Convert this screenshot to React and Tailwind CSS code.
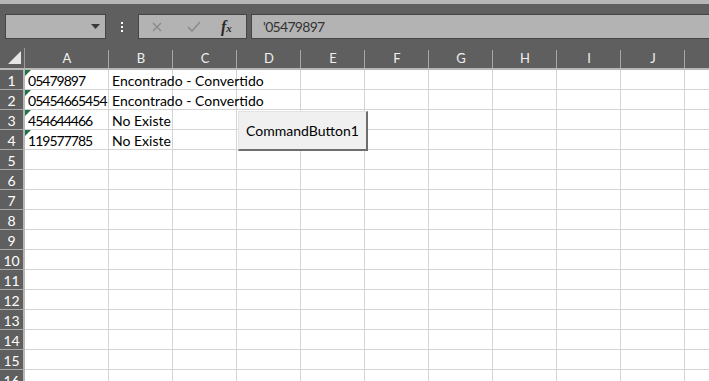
import React from 'react'

const cols = [
  { key: 'A', w: 'w-[84px]' },
  { key: 'B', w: 'w-[64px]' },
  { key: 'C', w: 'w-[64px]' },
  { key: 'D', w: 'w-[64px]' },
  { key: 'E', w: 'w-[64px]' },
  { key: 'F', w: 'w-[64px]' },
  { key: 'G', w: 'w-[64px]' },
  { key: 'H', w: 'w-[64px]' },
  { key: 'I', w: 'w-[64px]' },
  { key: 'J', w: 'w-[64px]' },
  { key: '', w: 'w-[64px]' },
]

const data = {
  1: { A: '05479897', B: 'Encontrado - Convertido' },
  2: { A: '05454665454', B: 'Encontrado - Convertido' },
  3: { A: '454644466', B: 'No Existe' },
  4: { A: '119577785', B: 'No Existe' },
}

const rows = Array.from({ length: 16 }, (_, i) => i + 1)

function Cell({ col, row }) {
  const value = data[row]?.[col.key]
  const isNum = col.key === 'A'
  return (
    <div
      className={`${col.w} h-[20px] shrink-0 border-r border-b border-[#d4d4d4] relative overflow-visible whitespace-nowrap`}
    >
      {isNum && value && (
        <div className="absolute top-0 left-0 w-0 h-0 border-t-[6px] border-r-[6px] border-t-[#217346] border-r-transparent" />
      )}
      {value && (
        <span
          className={`absolute left-[3px] top-[2px] text-[14px] leading-[18px] text-black z-10 ${isNum ? 'tracking-[-0.07em]' : ''}`}
        >
          {value}
        </span>
      )}
    </div>
  )
}

export default function App() {
  return (
    <div className="w-[709px] h-[381px] overflow-hidden bg-white font-['Lato',_'Liberation_Sans',_sans-serif] select-none">
      <div className="h-[4px] bg-[#b6b6b6]" />
      <div className="h-[36px] bg-[#5f5f5f] flex items-start pt-[10px]">
        <div className="ml-[5px] w-[101px] h-[25px] bg-[#b3b3b3] border border-[#454545] flex items-center justify-end pr-[5px]">
          <svg width="9" height="5" viewBox="0 0 9 5">
            <path d="M0 0 L9 0 L4.5 5 Z" fill="#3a3a3a" />
          </svg>
        </div>
        <div className="w-[32px] h-[25px] flex flex-col items-center justify-center gap-[2px]">
          <div className="w-[2px] h-[2px] bg-white" />
          <div className="w-[2px] h-[2px] bg-white" />
          <div className="w-[2px] h-[2px] bg-white" />
        </div>
        <div className="w-[109px] h-[25px] bg-[#b3b3b3] border border-[#454545] flex items-center">
          <svg width="12" height="12" viewBox="0 0 12 12" className="ml-[12px]">
            <path d="M2 2 L10 10 M10 2 L2 10" stroke="#8c8c8c" strokeWidth="1.5" />
          </svg>
          <svg width="14" height="12" viewBox="0 0 14 12" className="ml-[24px]">
            <path d="M1 6 L5 10 L13 1" stroke="#8c8c8c" strokeWidth="1.6" fill="none" />
          </svg>
          <span className="ml-[20px] text-[16px] italic font-bold font-['Liberation_Serif',_serif] text-[#2a2a2a] leading-none">
            f<span className="text-[11px]">x</span>
          </span>
        </div>
        <div className="ml-[4px] flex-1 h-[25px] bg-[#b3b3b3] border border-[#454545] border-r-0 flex items-center pl-[11px] text-[14px] text-[#333] tracking-[-0.05em]">
          '05479897
        </div>
      </div>

      <div className="relative">
        <div className="flex h-[30px] bg-[#5f5f5f] border-b-2 border-[#b8b8b8]">
          <div className="w-[25px] shrink-0 relative border-r border-[#9a9a9a] mt-[8px]">
            <svg width="13" height="13" viewBox="0 0 13 13" className="absolute right-[3px] bottom-[4px]">
              <path d="M13 0 L13 13 L0 13 Z" fill="#e6e6e6" />
            </svg>
          </div>
          {cols.map((c, i) => (
            <div
              key={i}
              className={`${c.w} shrink-0 flex items-end justify-center pb-[3px] text-[13px] leading-[13px] text-[#f0f0f0] relative`}
            >
              {c.key}
              <div className="absolute right-0 top-[10px] bottom-0 w-px bg-[#a8a8a8]" />
            </div>
          ))}
        </div>

        {rows.map((r) => (
          <div key={r} className="flex">
            <div className="w-[25px] h-[20px] shrink-0 bg-[#5f5f5f] border-b border-[#a8a8a8] border-r-2 border-r-[#b8b8b8] flex items-center justify-center pt-[1px] text-[14px] text-white">
              {r}
            </div>
            {cols.map((c, i) => (
              <Cell key={i} col={c} row={r} />
            ))}
          </div>
        ))}

        <div className="absolute left-[238px] top-[71px] w-[130px] h-[40px] bg-[#f0f0f0] border border-[#e3e3e3] border-r-2 border-b-2 border-r-[#6e6e6e] border-b-[#6e6e6e] flex items-center justify-center text-[14px] text-black z-20">
          CommandButton1
        </div>
      </div>
    </div>
  )
}
